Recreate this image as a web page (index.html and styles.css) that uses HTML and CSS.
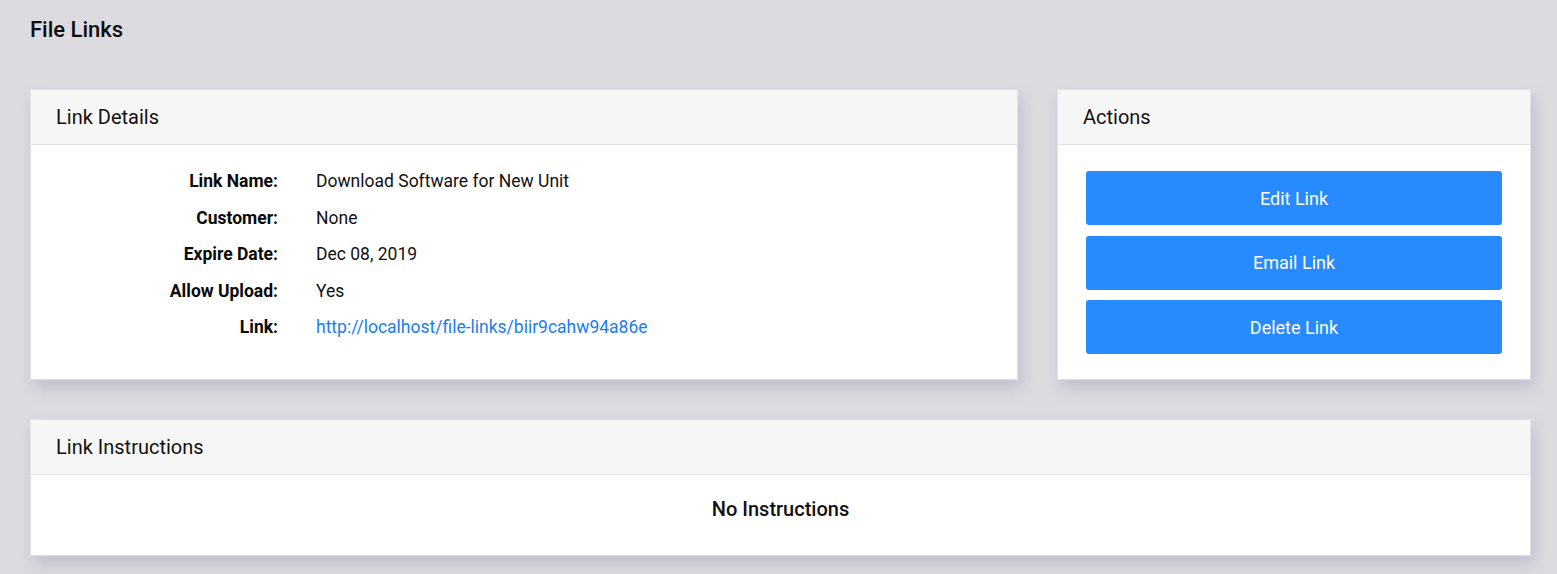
FILE: index.html
```html
<!DOCTYPE html>
<html>
<head>
<meta charset="utf-8">
<link rel="stylesheet" href="styles.css">
</head>
<body>
<div class="page">
  <h1 class="title">File Links</h1>
  <div class="top-row">
    <section class="card">
      <div class="card-header">Link Details</div>
      <div class="card-body details">
        <div class="label">Link Name:</div><div class="value">Download Software for New Unit</div>
        <div class="label">Customer:</div><div class="value">None</div>
        <div class="label">Expire Date:</div><div class="value">Dec 08, 2019</div>
        <div class="label">Allow Upload:</div><div class="value">Yes</div>
        <div class="label">Link:</div><div class="value"><a class="link" href="#">http://localhost/file-links/biir9cahw94a86e</a></div>
      </div>
    </section>
    <section class="card">
      <div class="card-header">Actions</div>
      <div class="card-body actions">
        <button class="btn">Edit Link</button>
        <button class="btn">Email Link</button>
        <button class="btn">Delete Link</button>
      </div>
    </section>
  </div>
  <section class="card">
    <div class="card-header">Link Instructions</div>
    <div class="card-body instructions">No Instructions</div>
  </section>
</div>
</body>
</html>
```
FILE: styles.css
```css
* { box-sizing: border-box; }
html, body { margin: 0; padding: 0; }
body {
  background: #dcdbe0;
  font-family: Roboto, "Liberation Sans", sans-serif;
  color: #111;
  width: 1557px;
  height: 574px;
  overflow: hidden;
}
.page {
  padding: 16px 26px 0 30px;
  display: flex;
  flex-direction: column;
}
.title {
  margin: 0;
  font-size: 22px;
  font-weight: 500;
  line-height: 28px;
  color: #0d0d0d;
  margin-bottom: 45px;
}
.top-row {
  display: grid;
  grid-template-columns: 1fr 474px;
  gap: 39px;
  margin-bottom: 39px;
}
.card {
  background: #fff;
  border: 1px solid #e3e3e7;
  box-shadow: 4px 8px 14px rgba(160, 158, 185, 0.45);
}
.card-header {
  background: #f6f6f6;
  border-bottom: 1px solid #e2e2e4;
  height: 55px;
  padding: 0 25px;
  display: flex;
  align-items: center;
  font-size: 20px;
  color: #111;
}
.details {
  display: grid;
  grid-template-columns: 222px 1fr;
  column-gap: 38px;
  padding: 18px 25px 33px;
  font-size: 17.5px;
  line-height: 36.5px;
}
.label {
  text-align: right;
  font-weight: 700;
  color: #0a0a0a;
}
.value { color: #111; }
.link { color: #1b7cf5; text-decoration: none; }
.actions {
  display: flex;
  flex-direction: column;
  gap: 10.5px;
  padding: 26px 28px 24px;
}
.btn {
  height: 54px;
  border: none;
  border-radius: 3px;
  background: #278afe;
  color: #fff;
  font-family: Roboto, "Liberation Sans", sans-serif;
  font-size: 18px;
  cursor: pointer;
}
.instructions {
  padding: 22px 0 34px;
  line-height: 24px;
  text-align: center;
  font-size: 20px;
  font-weight: 500;
  color: #111;
}
```
